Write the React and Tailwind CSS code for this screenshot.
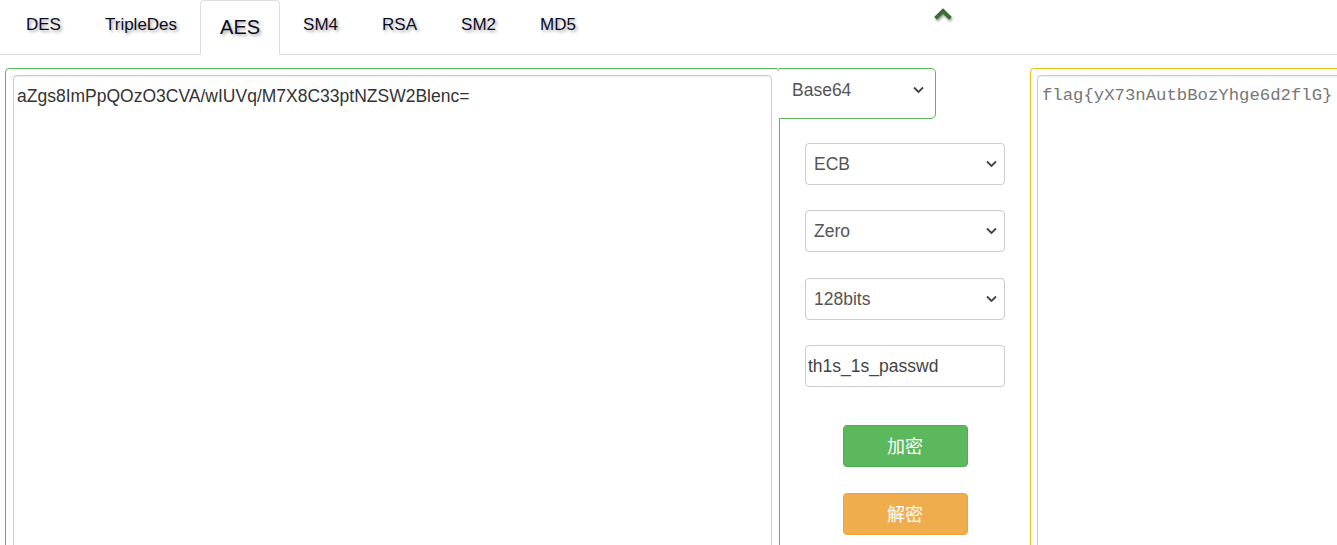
const tabs = ['DES', 'TripleDes', 'AES', 'SM4', 'RSA', 'SM2', 'MD5'];

const Caret = ({ className = '' }) => (
  <svg className={`pointer-events-none absolute top-1/2 -translate-y-1/2 ${className}`} width="11" height="7" viewBox="0 0 11 7">
    <polyline points="1,1 5.5,5.5 10,1" fill="none" stroke="#444" strokeWidth="1.8" />
  </svg>
);

const Select = ({ value, className = '', caret = 'right-[7px]' }) => (
  <div className={`relative ${className}`}>
    <select
      defaultValue={value}
      className="w-full h-full appearance-none bg-transparent pl-[8px] pr-6 text-[17.5px] text-[#555] outline-none"
    >
      <option>{value}</option>
    </select>
    <Caret className={caret} />
  </div>
);

const Tabs = () => (
  <div className="relative flex h-[55px] border-b border-[#ddd] pl-[5px]">
    {tabs.map((t) =>
      t === 'AES' ? (
        <div
          key={t}
          className="mr-[2px] -mb-px flex items-center px-[19px] pb-[2px] border border-[#ddd] border-b-white rounded-t-[4px] bg-white text-[20px] text-[#0b0b1e] [text-shadow:2px_2px_3px_#aaa]"
        >
          {t}
        </div>
      ) : (
        <div
          key={t}
          className="mr-[2px] flex items-center px-[21px] pb-[5px] text-[17px] text-[#0b0b1e] [text-shadow:2px_2px_3px_#aaa]"
        >
          {t}
        </div>
      )
    )}
    {/* back to top */}
    <svg
      className="absolute left-[934px] top-[6px] [filter:drop-shadow(1px_2px_1px_rgba(0,0,0,0.35))]"
      width="18"
      height="14"
      viewBox="0 0 18 14"
    >
      <polyline points="3,11 9,5 15,11" fill="none" stroke="#3b6d34" strokeWidth="4" strokeLinecap="square" />
    </svg>
  </div>
);

export default function App() {
  return (
    <div className="w-full h-[545px] overflow-hidden bg-white font-['Liberation_Sans',Arial,sans-serif]">
      <Tabs />

      <div className="mt-[13px] flex items-start">
        {/* input */}
        <div className="ml-[5px] w-[775px] h-[520px] shrink-0 border border-[#5cb85c] rounded-[4px] pt-[6px] px-[7px]">
          <textarea
            readOnly
            defaultValue="aZgs8ImPpQOzO3CVA/wIUVq/M7X8C33ptNZSW2Blenc="
            className="block w-full h-[500px] resize-none border border-[#ccc] rounded-[4px] pl-[3px] pt-[9px] text-[17.5px] leading-[23px] text-[#333] outline-none shadow-[inset_0_1px_1px_rgba(0,0,0,0.075)]"
          />
        </div>

        {/* options */}
        <div className="w-[250px] shrink-0 flex flex-col items-center">
          <div className="relative self-start -ml-px w-[157px] h-[51px] border-t border-r border-b border-[#5cb85c] rounded-r-[5px] bg-white pl-[5px] pr-[8px]">
            <Select value="Base64" className="h-[42px]" caret="right-[3px]" />
          </div>
          <Select value="ECB" className="mt-[24px] w-[200px] h-[42px] border border-[#ccc] rounded-[4px]" />
          <Select value="Zero" className="mt-[25px] w-[200px] h-[42px] border border-[#ccc] rounded-[4px]" />
          <Select value="128bits" className="mt-[26px] w-[200px] h-[42px] border border-[#ccc] rounded-[4px]" />
          <input
            readOnly
            defaultValue="th1s_1s_passwd"
            className="mt-[25px] w-[200px] h-[42px] border border-[#ccc] rounded-[4px] pl-[2px] text-[17.5px] text-[#444] outline-none"
          />
          <button className="mt-[38px] w-[125px] h-[42px] pb-[2px] rounded-[4px] bg-[#5cb85c] border border-[#4cae4c] text-white text-[18px] font-['Noto_Sans_CJK_SC',sans-serif]">
            加密
          </button>
          <button className="mt-[26px] w-[125px] h-[42px] pb-[2px] rounded-[4px] bg-[#f0ad4e] border border-[#eea236] text-white text-[18px] font-['Noto_Sans_CJK_SC',sans-serif]">
            解密
          </button>
        </div>

        {/* output */}
        <div className="w-[400px] h-[520px] shrink-0 border border-[#eebf14] rounded-[4px] pt-[6px] pl-[6px]">
          <textarea
            readOnly
            defaultValue="flag{yX73nAutbBozYhge6d2flG}"
            className="block w-full h-[500px] resize-none border border-[#ccc] rounded-[4px] pl-[4px] pt-[10px] text-[17.3px] leading-[20px] text-[#777] font-['Liberation_Mono','Courier_New',monospace] outline-none shadow-[inset_0_1px_1px_rgba(0,0,0,0.075)]"
          />
        </div>
      </div>
    </div>
  );
}
